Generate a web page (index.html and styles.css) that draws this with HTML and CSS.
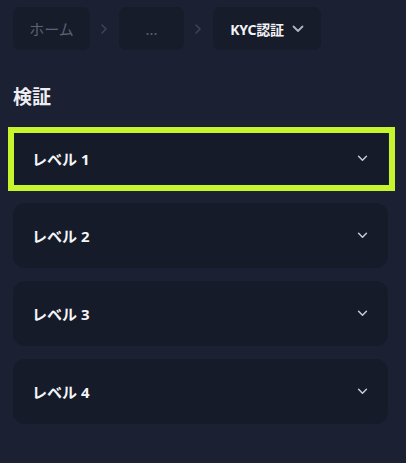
FILE: index.html
```html
<!DOCTYPE html>
<html lang="ja">
<head>
<meta charset="utf-8">
<link rel="stylesheet" href="styles.css">
</head>
<body>
<div class="page">
  <nav class="crumbs">
    <div class="crumb muted">ホーム</div>
    <svg class="sep" viewBox="0 0 8 12" width="8" height="12"><path d="M2 2l4 4-4 4" fill="none" stroke="currentColor" stroke-width="1.5" stroke-linecap="round" stroke-linejoin="round"/></svg>
    <div class="crumb muted dots">...</div>
    <svg class="sep" viewBox="0 0 8 12" width="8" height="12"><path d="M2 2l4 4-4 4" fill="none" stroke="currentColor" stroke-width="1.5" stroke-linecap="round" stroke-linejoin="round"/></svg>
    <div class="crumb current">KYC認証
      <svg class="down" viewBox="0 0 12 8" width="12" height="8"><path d="M1.5 1.5L6 6l4.5-4.5" fill="none" stroke="currentColor" stroke-width="1.8" stroke-linecap="round" stroke-linejoin="round"/></svg>
    </div>
  </nav>
  <h2 class="title">検証</h2>
  <div class="list">
    <div class="card focused"><span class="label">レベル 1</span><svg class="chev" viewBox="0 0 12 8" width="11" height="7"><path d="M1.5 1.5L6 6l4.5-4.5" fill="none" stroke="currentColor" stroke-width="1.7" stroke-linecap="round" stroke-linejoin="round"/></svg></div>
    <div class="card"><span class="label">レベル 2</span><svg class="chev" viewBox="0 0 12 8" width="11" height="7"><path d="M1.5 1.5L6 6l4.5-4.5" fill="none" stroke="currentColor" stroke-width="1.7" stroke-linecap="round" stroke-linejoin="round"/></svg></div>
    <div class="card"><span class="label">レベル 3</span><svg class="chev" viewBox="0 0 12 8" width="11" height="7"><path d="M1.5 1.5L6 6l4.5-4.5" fill="none" stroke="currentColor" stroke-width="1.7" stroke-linecap="round" stroke-linejoin="round"/></svg></div>
    <div class="card"><span class="label">レベル 4</span><svg class="chev" viewBox="0 0 12 8" width="11" height="7"><path d="M1.5 1.5L6 6l4.5-4.5" fill="none" stroke="currentColor" stroke-width="1.7" stroke-linecap="round" stroke-linejoin="round"/></svg></div>
  </div>
</div>
</body>
</html>
```
FILE: styles.css
```css
html, body {
  margin: 0;
  padding: 0;
  background: #1b2032;
  height: 100%;
}
body {
  font-family: "Noto Sans", "Noto Sans CJK JP", sans-serif;
  color: #ffffff;
}
.page {
  padding: 7px 18px 0 13px;
}
.crumbs {
  display: flex;
  align-items: center;
  height: 43px;
}
.crumb {
  height: 43px;
  border-radius: 7px;
  background: #171c2b;
  display: flex;
  align-items: center;
  justify-content: center;
  font-size: 15px;
  box-sizing: border-box;
}
.crumb.muted {
  color: #5b6274;
  width: 77px;
}
.crumb.dots {
  width: 65px;
}
.crumb.current {
  width: 108px;
  font-weight: 700;
  font-size: 14px;
  color: #f2f3f5;
  gap: 8px;
  letter-spacing: -0.3px;
}
.crumb.current .down {
  color: #aeb3bf;
}
.sep {
  color: #3e4456;
  margin: 0 11px 0 10px;
}
.title {
  margin: 35px 0 0;
  font-size: 19px;
  line-height: 25px;
  font-weight: 700;
  color: #eceef2;
}
.list {
  margin-top: 16px;
  display: flex;
  flex-direction: column;
  gap: 13px;
}
.card {
  position: relative;
  height: 64px;
  border-radius: 12px;
  background: #161b29;
  display: flex;
  align-items: center;
  justify-content: space-between;
  padding: 0 20px 0 19px;
}
.card + .card {
  height: 65px;
}
.card.focused {
  border-radius: 0;
}
.card.focused::after {
  content: "";
  position: absolute;
  left: -5px;
  right: -7px;
  top: 1px;
  bottom: -1px;
  border: 6px solid #c6f52d;
}
.label {
  font-size: 15px;
  font-weight: 700;
  color: #f4f5f7;
}
.chev {
  color: #c8ccd4;
}
```
